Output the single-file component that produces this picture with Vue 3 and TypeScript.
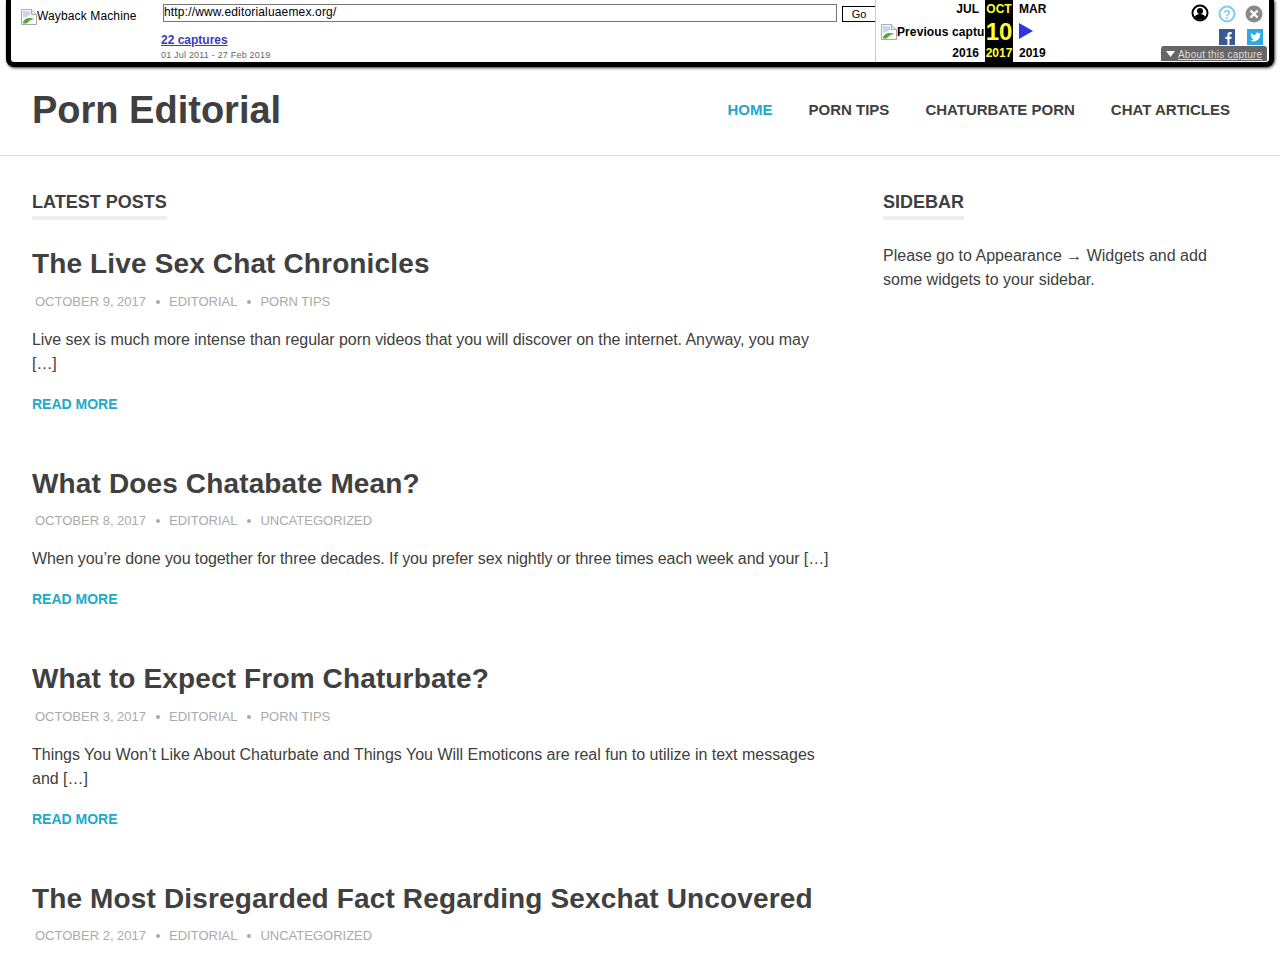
<script setup lang="ts">
interface Post {
  title: string;
  date: string;
  category: string;
  excerpt: string;
  tracking: number;
}

const navItems = ['Home', 'Porn Tips', 'Chaturbate Porn', 'Chat Articles'];

const posts: Post[] = [
  {
    title: 'The Live Sex Chat Chronicles',
    date: 'October 9, 2017',
    category: 'Porn Tips',
    excerpt: 'Live sex is much more intense than regular porn videos that you will discover on the internet. Anyway, you may […]',
    tracking: -0.058,
  },
  {
    title: 'What Does Chatabate Mean?',
    date: 'October 8, 2017',
    category: 'Uncategorized',
    excerpt: 'When you’re done you together for three decades. If you prefer sex nightly or three times each week and your […]',
    tracking: -0.083,
  },
  {
    title: 'What to Expect From Chaturbate?',
    date: 'October 3, 2017',
    category: 'Porn Tips',
    excerpt: 'Things You Won’t Like About Chaturbate and Things You Will Emoticons are real fun to utilize in text messages and […]',
    tracking: -0.01,
  },
  {
    title: 'The Most Disregarded Fact Regarding Sexchat Uncovered',
    date: 'October 2, 2017',
    category: 'Uncategorized',
    excerpt: '',
    tracking: 0,
  },
];
</script>

<template>
  <div class="page">
    <div class="wb-bar">
      <div class="wb-logo">
        <svg class="broken" width="16" height="16" viewBox="0 0 16 16">
          <path d="M.5.500h10l5 5v10H.500z" fill="#fff" stroke="#a9a9a9" />
          <path d="M10.500.500v5h5" fill="#e8e8e8" stroke="#a9a9a9" />
          <path d="M2 2h7v4l-4 2-3 1z" fill="#c5d6f2" />
          <path d="M1.500 14.500c1-4 4-6 8-5.500l4 1-4 1-4 3.500z" fill="#5aa53c" />
        </svg>
        <span>Wayback Machine</span>
      </div>
      <div class="wb-form">
        <div class="wb-url-row">
          <div class="wb-input">http://www.editorialuaemex.org/</div>
          <div class="wb-go">Go</div>
        </div>
        <a class="wb-captures">22 captures</a>
        <div class="wb-range">01 Jul 2011 - 27 Feb 2019</div>
      </div>
      <div class="wb-cal">
        <div class="wb-cal-prev">
          <div class="wb-label">JUL</div>
          <div class="wb-prev-img">
            <svg class="broken" width="16" height="16" viewBox="0 0 16 16">
              <path d="M.5.500h10l5 5v10H.500z" fill="#fff" stroke="#a9a9a9" />
              <path d="M10.500.500v5h5" fill="#e8e8e8" stroke="#a9a9a9" />
              <path d="M2 2h7v4l-4 2-3 1z" fill="#c5d6f2" />
              <path d="M1.500 14.500c1-4 4-6 8-5.500l4 1-4 1-4 3.500z" fill="#5aa53c" />
            </svg>
            <span>Previous capture</span>
          </div>
          <div class="wb-label">2016</div>
        </div>
        <div class="wb-cal-now">
          <div>OCT</div>
          <div class="wb-day">10</div>
          <div>2017</div>
        </div>
        <div class="wb-cal-next">
          <div class="wb-label">MAR</div>
          <svg class="wb-next" width="14" height="27" viewBox="0 0 14 27">
            <path d="M0 5l14 8-14 8z" fill="#3333e6" />
          </svg>
          <div class="wb-label">2019</div>
        </div>
      </div>
      <div class="wb-tools">
        <div class="wb-icons">
          <svg width="18" height="18" viewBox="0 0 18 18">
            <circle cx="9" cy="9" r="7.500" fill="#fff" stroke="#000" stroke-width="2" />
            <circle cx="9" cy="7" r="3" fill="#000" />
            <path d="M3.500 13.500c1-3 3-3.600 5.500-3.600s4.500.6 5.500 3.600c-3 3-8 3-11 0z" fill="#000" />
          </svg>
          <svg class="wb-shift" width="18" height="18" viewBox="0 0 18 18">
            <circle cx="9" cy="9" r="7.500" fill="#fff" stroke="#7fcde8" stroke-width="2" />
            <text x="9" y="13.500" text-anchor="middle" class="wb-q">?</text>
          </svg>
          <svg class="wb-shift" width="18" height="18" viewBox="0 0 18 18">
            <circle cx="9" cy="9" r="8.500" fill="#8a8a8a" />
            <path d="M5.500 5.500l7 7M12.500 5.500l-7 7" stroke="#fff" stroke-width="2.400" />
          </svg>
        </div>
        <div class="wb-social">
          <svg width="16" height="16" viewBox="0 0 16 16">
            <rect width="16" height="16" fill="#3b5998" />
            <path d="M10.500 16v-6h1.800l.3-2.300h-2.100V6.300c0-.7.200-1.100 1.100-1.100h1.100v-2c-.3 0-.9-.1-1.600-.1-1.600 0-2.700 1-2.700 2.800v1.800H6.500V10h1.900v6z" fill="#fff" />
          </svg>
          <svg width="16" height="16" viewBox="0 0 16 16">
            <rect width="16" height="16" fill="#2ea9e6" />
            <path d="M13.500 4.500c-.4.200-.8.300-1.200.3.400-.3.800-.7.900-1.100-.4.200-.9.400-1.300.5-.9-1-2.600-.7-3.200.5-.2.500-.2 1-.1 1.400-1.800-.1-3.300-.9-4.400-2.200-.6 1-.3 2.200.6 2.900-.3 0-.7-.1-1-.3 0 1.100.8 2 1.900 2.300-.3.100-.7.100-1 0 .3.900 1.100 1.500 2.100 1.600-1 .8-2.200 1.100-3.400 1 3.700 2.300 9.800.7 9.800-6.300.5-.2.900-.6 1.300-1.100z" fill="#fff" />
          </svg>
        </div>
        <div class="wb-about">
          <svg width="9" height="6" viewBox="0 0 9 6"><path d="M0 0h9L4.500 6z" fill="#fff" /></svg>
          <a>About this capture</a>
        </div>
      </div>
    </div>

    <header class="site-header">
      <h1 class="site-title">Porn Editorial</h1>
      <nav class="site-nav">
        <a v-for="(item, i) in navItems" :key="item" :class="{ active: i === 0 }">{{ item }}</a>
      </nav>
    </header>

    <div class="content">
      <main class="posts">
        <h2 class="widget-title"><span>Latest Posts</span></h2>
        <article v-for="post in posts" :key="post.title" class="post">
          <h3 class="post-title">{{ post.title }}</h3>
          <div class="post-meta">
            <span>{{ post.date }}</span>
            <i></i>
            <span>Editorial</span>
            <i></i>
            <span>{{ post.category }}</span>
          </div>
          <template v-if="post.excerpt">
            <p class="post-excerpt" :style="{ letterSpacing: post.tracking + 'px' }">{{ post.excerpt }}</p>
            <a class="read-more">Read More</a>
          </template>
        </article>
      </main>
      <aside class="sidebar">
        <h2 class="widget-title"><span>Sidebar</span></h2>
        <p class="sidebar-text">Please go to Appearance → Widgets and add some widgets to your sidebar.</p>
      </aside>
    </div>
  </div>
</template>

<style>
html,
body {
  margin: 0;
  background: #fff;
}
</style>

<style scoped>
.page {
  height: 960px;
  overflow: hidden;
  font-family: "Liberation Sans", Arial, sans-serif;
  color: #404040;
}

/* wayback toolbar */
.wb-bar {
  box-sizing: border-box;
  display: flex;
  height: 67px;
  margin: 0 6px;
  border: 5px solid #000;
  border-top: none;
  border-radius: 0 0 8px 8px;
  box-shadow: 1px 1px 3px #333;
  background: #fff;
  color: #000;
  font-size: 12px;
}

.wb-logo {
  display: flex;
  align-items: flex-start;
  width: 150px;
  padding: 9px 0 0 10px;
  box-sizing: border-box;
  letter-spacing: 0.13px;
}

.broken {
  flex: none;
}

.wb-form {
  width: 715px;
}

.wb-url-row {
  display: flex;
  gap: 5px;
  margin: 4px 0 0 2px;
}

.wb-input {
  flex: 1;
  box-sizing: border-box;
  height: 18px;
  border: 1px solid #767676;
  line-height: 15px;
  font-size: 12px;
  letter-spacing: 0.16px;
}

.wb-go {
  box-sizing: border-box;
  width: 34px;
  height: 16px;
  margin-top: 2px;
  border: 1px solid #000;
  text-align: center;
  font-size: 11px;
  line-height: 14px;
}

.wb-captures {
  display: block;
  margin-top: 10px;
  color: #3b3bbb;
  font-size: 12px;
  font-weight: 700;
  line-height: 16px;
  text-decoration: underline;
}

.wb-range {
  color: #666;
  font-size: 9px;
  line-height: 14px;
  letter-spacing: 0.2px;
}

.wb-cal {
  display: flex;
  height: 62px;
  width: 171px;
  font-weight: 700;
  font-size: 12px;
}

.wb-cal-prev {
  width: 110px;
  margin-left: -1px;
  padding-top: 1px;
  border-left: 1px solid #ccc;
  text-align: right;
  box-sizing: border-box;
}

.wb-label {
  height: 17px;
  line-height: 17px;
}

.wb-cal-prev .wb-label {
  padding-right: 6px;
}

.wb-prev-img {
  display: flex;
  align-items: center;
  height: 27px;
  margin-left: 5px;
  overflow: hidden;
  white-space: nowrap;
  text-align: left;
  letter-spacing: 0.1px;
}

.wb-cal-now {
  width: 28px;
  padding-top: 1px;
  background: #000;
  color: #ff3;
  text-align: center;
  line-height: 17px;
  flex: none;
}

.wb-day {
  height: 27px;
  font-size: 24px;
  line-height: 28px;
}

.wb-cal-next {
  padding: 1px 0 0 6px;
}

.wb-next {
  display: block;
}

.wb-tools {
  flex: 1;
  display: flex;
  flex-direction: column;
  align-items: flex-end;
  padding-right: 2px;
}

.wb-icons {
  display: flex;
  gap: 9px;
  margin: 4px 4px 0 0;
}

.wb-shift {
  margin-top: 1px;
}

.wb-q {
  fill: #7fcde8;
  font-size: 12px;
  font-weight: 700;
}

.wb-social {
  display: flex;
  gap: 12px;
  margin: 6px 4px 0 0;
}

.wb-about {
  display: flex;
  align-items: center;
  gap: 3px;
  width: 106px;
  box-sizing: border-box;
  margin-top: 1px;
  padding: 2px 3px 0 5px;
  height: 15px;
  background: #666;
  border-radius: 3px 3px 0 0;
  color: #ddd;
  font-size: 10px;
  font-weight: 400;
  letter-spacing: 0.2px;
  white-space: nowrap;
}

.wb-about svg {
  margin: 0 0 2px;
}

.wb-about a {
  text-decoration: underline;
}

/* site header */
.site-header {
  display: flex;
  align-items: center;
  justify-content: space-between;
  height: 88px;
  padding: 0 50px 0 32px;
  border-bottom: 1px solid #ddd;
}

.site-title {
  margin: -2px 0 0;
  font-size: 38px;
  font-weight: 700;
  line-height: 44px;
}

.site-nav {
  display: flex;
  gap: 36px;
  margin-top: -4px;
  font-size: 15px;
  font-weight: 700;
  text-transform: uppercase;
}

.site-nav .active {
  color: #22a8c8;
}

/* content */
.content {
  display: flex;
  padding: 35px 32px 0;
}

.posts {
  width: 800px;
  flex: none;
}

.sidebar {
  margin-left: 51px;
  width: 365px;
}

.widget-title {
  margin: 0 0 25px;
  font-size: 18px;
  font-weight: 700;
  line-height: 23px;
  text-transform: uppercase;
}

.widget-title span {
  display: inline-block;
  padding-bottom: 2px;
  border-bottom: 4px solid #eee;
}

.post {
  margin-bottom: 51.1px;
}

.post-title {
  margin: 0;
  font-size: 28px;
  font-weight: 700;
  line-height: 38px;
  letter-spacing: 0.14px;
}

.post-meta {
  display: flex;
  align-items: center;
  gap: 9.5px;
  margin-top: 8.5px;
  padding-left: 3px;
  color: #aaa;
  font-size: 13px;
  line-height: 20px;
  text-transform: uppercase;
}

.post-meta i {
  width: 4px;
  height: 4px;
  border-radius: 50%;
  background: #aaa;
}

.post-excerpt {
  margin: 16px 0 0;
  font-size: 16px;
  line-height: 24px;
}

.read-more {
  display: block;
  margin-top: 18px;
  color: #22a8c8;
  font-size: 14px;
  font-weight: 700;
  line-height: 20px;
  text-transform: uppercase;
}

.sidebar-text {
  margin: -1px 0 0;
  font-size: 16px;
  line-height: 24px;
}
</style>
